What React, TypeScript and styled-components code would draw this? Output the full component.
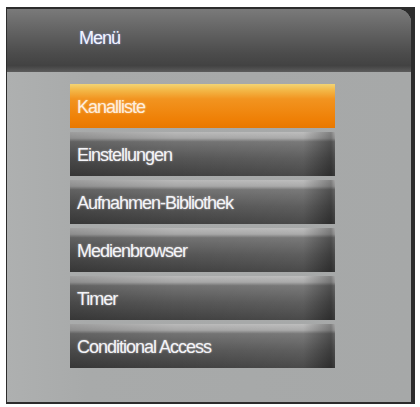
import React from "react";
import styled, { createGlobalStyle } from "styled-components";

const GlobalStyle = createGlobalStyle`
  html, body {
    margin: 0;
    padding: 0;
    background: #ffffff;
  }
  body {
    font-family: "Liberation Sans", Arial, sans-serif;
  }
`;

type MenuItem = {
  label: string;
  active?: boolean;
};

const items: MenuItem[] = [
  { label: "Kanalliste", active: true },
  { label: "Einstellungen" },
  { label: "Aufnahmen-Bibliothek" },
  { label: "Medienbrowser" },
  { label: "Timer" },
  { label: "Conditional Access" },
];

const App: React.FC = () => {
  return (
    <>
      <GlobalStyle />
      <Screen>
        <Frame>
          <Panel>
            <Header>
              <Title>Menü</Title>
            </Header>
            <Body>
              <List>
                {items.map((item) => (
                  <Entry key={item.label} $active={item.active}>
                    <EntryLabel>{item.label}</EntryLabel>
                  </Entry>
                ))}
              </List>
            </Body>
          </Panel>
        </Frame>
      </Screen>
    </>
  );
};

export default App;

const Screen = styled.div`
  width: 420px;
  height: 407px;
  padding: 7px 5px 3px 6px;
  box-sizing: border-box;
  display: flex;
`;

const Frame = styled.div`
  flex: 1;
  display: flex;
  background: #2c2c2c;
  padding: 2px 4px 2px 1px;
  box-sizing: border-box;
`;

const Panel = styled.div`
  flex: 1;
  display: flex;
  flex-direction: column;
  border-top-right-radius: 14px;
  overflow: hidden;
  background: #a8aaaa;
  box-shadow: inset -6px 0 0 -5px #6c6e6e;
`;

const Header = styled.div`
  height: 63px;
  flex: 0 0 auto;
  display: flex;
  align-items: center;
  padding: 0 0 4px 72px;
  box-sizing: border-box;
  background: linear-gradient(
    180deg,
    #7a7a7a 0%,
    #666666 30%,
    #4c4c4c 70%,
    #424242 90%,
    #5c5c5c 100%
  );
`;

const Title = styled.div`
  color: #f2f4ff;
  font-size: 18px;
  letter-spacing: -1px;
  text-shadow: 0 0 2px rgba(150, 170, 255, 0.8);
`;

const Body = styled.div`
  flex: 1;
  padding: 12px 0 0 63px;
  background: linear-gradient(90deg, #aeb0b0 0%, #a8aaaa 20%, #a6a8a8 100%);
`;

const List = styled.div`
  width: 265px;
  display: flex;
  flex-direction: column;
  gap: 4px;
`;

const Entry = styled.div<{ $active?: boolean }>`
  height: 44px;
  display: flex;
  align-items: center;
  padding: 2px 0 0 7px;
  box-sizing: border-box;
  color: ${(p) => (p.$active ? "#ffeedd" : "#f4f4f8")};
  background: ${(p) =>
    p.$active
      ? "linear-gradient(180deg, #f2d474 0%, #f3b848 14%, #f29420 34%, #ef8006 80%, #e87800 100%)"
      : `linear-gradient(90deg, rgba(0,0,0,0.15) 0%, rgba(0,0,0,0) 40%, rgba(255,255,255,0.05) 88%, rgba(0,0,0,0.3) 98.5%, rgba(0,0,0,0.1) 100%),
         linear-gradient(180deg, #bababa 0%, #a6a6a6 14%, #727272 22%, #565656 60%, #404040 100%)`};
`;

const EntryLabel = styled.span`
  font-size: 18px;
  letter-spacing: -1px;
  text-shadow: 0 0 2px rgba(255, 255, 255, 0.55);
  white-space: nowrap;
`;
